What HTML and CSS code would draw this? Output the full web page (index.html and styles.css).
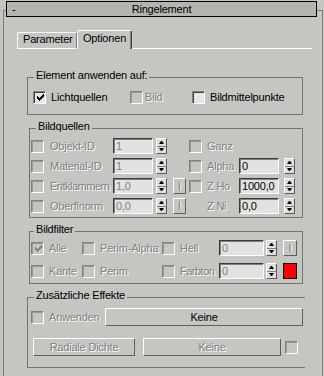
FILE: index.html
```html
<!DOCTYPE html>
<html lang="de">

<head>
    <meta charset="UTF-8">
    <meta name="viewport" content="width=device-width, initial-scale=1.0">
    <title>Ringelement</title>
    <link rel="stylesheet" href="styles.css">
</head>

<body>

    <div class="rollout">
        <div class="rollout-title">
            <span class="rollout-toggle">-</span>
            <span class="rollout-name">Ringelement</span>
        </div>

        <div class="tabs">
            <div class="tab tab-params">Parameter</div>
            <div class="tab tab-options tab-active">Optionen</div>
            <div class="tab-line"></div>
        </div>

        <!-- Element anwenden auf -->
        <fieldset class="group group-apply">
            <legend>Element anwenden auf:</legend>
            <div class="apply-row">
                <label class="check check-lights">
                    <span class="box box-on">
                        <svg width="7" height="7" viewBox="0 0 7 7"><path d="M6 0h1v1h-1zM5 1h2v1h-2zM0 2h1v1h-1zM4 2h3v1h-3zM0 3h2v1h-2zM3 3h3v1h-3zM0 4h5v1h-5zM1 5h3v1h-3zM2 6h1v1h-1z" fill="#000"/></svg>
                    </span>
                    Lichtquellen
                </label>
                <label class="check check-image off"><span class="box"></span>Bild</label>
                <label class="check"><span class="box box-on"></span>Bildmittelpunkte</label>
            </div>
        </fieldset>

        <!-- Bildquellen -->
        <fieldset class="group group-sources">
            <legend>Bildquellen</legend>
            <div class="source-grid">
                <label class="check off"><span class="box"></span>Objekt-ID</label>
                <span class="field off">1</span>
                <span class="spin"><i class="up"></i><i class="dn"></i></span>
                <span></span>
                <label class="check check-right off"><span class="box"></span>Ganz</label>
                <span></span>
                <span></span>

                <label class="check off"><span class="box"></span>Material-ID</label>
                <span class="field off">1</span>
                <span class="spin"><i class="up"></i><i class="dn"></i></span>
                <span></span>
                <label class="check check-right off"><span class="box"></span>Alpha</label>
                <span class="field">0</span>
                <span class="spin spin-right"><i class="up"></i><i class="dn"></i></span>

                <label class="check check-tight off"><span class="box"></span>Entklammern</label>
                <span class="field off">1,0</span>
                <span class="spin"><i class="up"></i><i class="dn"></i></span>
                <span class="ibtn">I</span>
                <label class="check check-right off"><span class="box"></span>Z Ho</label>
                <span class="field">1000,0</span>
                <span class="spin spin-right"><i class="up"></i><i class="dn"></i></span>

                <label class="check off"><span class="box"></span>Oberflnorm</label>
                <span class="field off">0,0</span>
                <span class="spin"><i class="up"></i><i class="dn"></i></span>
                <span class="ibtn">I</span>
                <span class="plain-label off">Z Ni</span>
                <span class="field">0,0</span>
                <span class="spin spin-right"><i class="up"></i><i class="dn"></i></span>
            </div>
        </fieldset>

        <!-- Bildfilter -->
        <fieldset class="group group-filter">
            <legend>Bildfilter</legend>
            <div class="filter-grid">
                <label class="check check-all off">
                    <span class="box">
                        <svg width="7" height="7" viewBox="0 0 7 7"><path d="M6 0h1v1h-1zM5 1h2v1h-2zM0 2h1v1h-1zM4 2h3v1h-3zM0 3h2v1h-2zM3 3h3v1h-3zM0 4h5v1h-5zM1 5h3v1h-3zM2 6h1v1h-1z" fill="#808080"/></svg>
                    </span>
                    Alle
                </label>
                <label class="check check-mid off"><span class="box"></span>Perim-Alpha</label>
                <label class="check check-far off"><span class="box"></span>Hell</label>
                <span class="field field-wide off">0</span>
                <span class="spin spin-filter"><i class="up"></i><i class="dn"></i></span>
                <span class="ibtn ibtn-filter">I</span>

                <label class="check off"><span class="box"></span>Kante</label>
                <label class="check check-mid off"><span class="box"></span>Perim</label>
                <label class="check check-far check-tight off"><span class="box"></span>Farbton</label>
                <span class="field field-wide off">0</span>
                <span class="spin spin-filter"><i class="up"></i><i class="dn"></i></span>
                <span class="swatch"></span>
            </div>
        </fieldset>

        <!-- Zusätzliche Effekte -->
        <fieldset class="group group-extra">
            <legend>Zusätzliche Effekte</legend>
            <div class="extra-row">
                <label class="check check-apply off"><span class="box"></span>Anwenden</label>
                <span class="btn btn-none">Keine</span>
            </div>
            <div class="extra-row-2">
                <span class="btn btn-radial off">Radiale Dichte</span>
                <span class="btn btn-none-2 off">Keine</span>
                <span class="box box-last"></span>
            </div>
        </fieldset>
    </div>

</body>

</html>
```

FILE: styles.css
```css
body {
    margin: 0;
    height: 376px;
    overflow: hidden;
    background-color: #c5c6c1;
    font-family: "Liberation Sans", Arial, sans-serif;
    font-size: 11px;
    letter-spacing: -0.2px;
    color: #000;
}

.off {
    color: #808080;
    text-shadow: 1px 1px 0 #fff;
}

/* rollout frame + title bar */
.rollout {
    box-sizing: border-box;
    width: 320px;
    height: 366px;
    margin: 10px 0 0 3px;
    border: 1px solid #7c7e7a;
    border-bottom: none;
}

.rollout-title {
    box-sizing: border-box;
    display: flex;
    width: 311px;
    height: 16px;
    margin: -10px 0 0 2px;
    border: 1px solid #000;
    background-color: #b3b5af;
    line-height: 14px;
}

.rollout-toggle {
    width: 14px;
    padding-left: 5px;
}

.rollout-name {
    flex: 1;
    text-align: center;
    padding-right: 19px;
}

/* tabs */
.tabs {
    display: flex;
    align-items: flex-end;
    width: 295px;
    margin: 13px 0 0 13px;
}

.tab {
    box-sizing: border-box;
    padding: 0 0 2px 5px;
    border: 1px solid;
    border-color: #fff #7a7a7a #fff #fff;
    border-radius: 2px 2px 0 0;
    line-height: 13px;
}

.tab-params {
    width: 60px;
}

.tab-options {
    width: 55px;
}

.tab-active {
    padding: 1px 0 4px 5px;
    border-bottom: none;
    border-right-color: #404040;
    box-shadow: inset -1px 0 #808080;
}

.tab-line {
    flex: 1;
    border-bottom: 1px solid #fff;
}

/* group boxes */
.group {
    box-sizing: border-box;
    min-width: 0;
    margin: 5px 0 0 25px;
    padding: 0;
    border: 1px solid #737571;
}

.group legend {
    margin-left: 6px;
    padding: 0 2px 4px;
    line-height: 13px;
}

.group-apply {
    width: 276px;
    margin: 20px 0 0 23px;
    padding: 3px 0 9px;
}

.group-sources {
    width: 274px;
    padding: 1px 0 3px;
}

.group-filter {
    width: 274px;
    padding: 0 0 4px;
}

.group-filter legend {
    margin-left: 4px;
}

.group-extra {
    width: 278px;
    margin-left: 23px;
    padding: 2px 0 11px;
    border-right: none;
}

/* checkboxes */
.check {
    display: flex;
    align-items: center;
    gap: 6px;
    height: 16px;
    white-space: nowrap;
}

.check-tight {
    letter-spacing: -0.5px;
}

.box {
    box-sizing: border-box;
    display: flex;
    align-items: center;
    justify-content: center;
    flex: none;
    width: 13px;
    height: 13px;
    border: 1px solid;
    border-color: #808080 #fff #fff #808080;
    box-shadow: inset 1px 1px #9a9a98;
}

.box-on {
    background-color: #e6e6e4;
    box-shadow: inset 1px 1px #404040;
}

.box svg {
    display: block;
    margin: 1px 0 0 1px;
}

.apply-row {
    display: flex;
    height: 16px;
}

.check-lights {
    width: 97px;
    padding-left: 5px;
    gap: 5px;
}

.check-image {
    width: 62px;
    gap: 2px;
}

.apply-row .check:last-child {
    gap: 5px;
}

/* inputs, spinners, buttons */
.field {
    box-sizing: border-box;
    display: block;
    width: 40px;
    height: 16px;
    padding-left: 2px;
    border: 1px solid;
    border-color: #3a3a3a #fff #fff #3a3a3a;
    box-shadow: inset 1px 1px #808080;
    background-color: #e2e2e0;
    line-height: 14px;
    overflow: hidden;
}

.field.off {
    text-shadow: none;
}

.spin {
    box-sizing: border-box;
    display: flex;
    flex-direction: column;
    width: 11px;
    height: 16px;
    margin-left: 3px;
    border: 1px solid;
    border-color: #fff #5a5a5a #5a5a5a #fff;
    background-color: #dddddb;
}

.spin i {
    flex: 1;
    display: flex;
    align-items: center;
    justify-content: center;
}

.spin i + i {
    border-top: 1px solid #808080;
}

.spin i::after {
    content: "";
    width: 1px;
    border-left: 2px solid transparent;
    border-right: 2px solid transparent;
}

.spin .up::after {
    border-bottom: 3px solid #000;
}

.spin .dn::after {
    border-top: 3px solid #000;
}

.ibtn {
    box-sizing: border-box;
    width: 13px;
    height: 16px;
    margin-left: 3px;
    border: 1px solid;
    border-color: #fff #5e5e5e #5e5e5e #fff;
    color: #808080;
    text-shadow: 1px 0 0 #fff;
    text-align: center;
    line-height: 14px;
}

.btn {
    box-sizing: border-box;
    display: block;
    height: 18px;
    border: 1px solid;
    border-color: #fff #5e5e5e #5e5e5e #fff;
    text-align: center;
    line-height: 16px;
}

/* Bildquellen */
.source-grid {
    display: grid;
    grid-template-columns: 83px 40px 17px 16px 53px 40px 16px;
    grid-auto-rows: 16px;
    row-gap: 4px;
    align-items: center;
}

.source-grid > .check {
    padding-left: 1px;
}

.source-grid > .check-right {
    padding-left: 3px;
    gap: 5px;
}

.plain-label {
    padding-left: 21px;
    white-space: nowrap;
}

.spin-right {
    margin-left: 5px;
}

/* Bildfilter */
.filter-grid {
    display: grid;
    grid-template-columns: 52px 79px 58px 45px 17px 16px;
    grid-auto-rows: 16px;
    row-gap: 7px;
    align-items: center;
}

.filter-grid > .check {
    padding-left: 1px;
    gap: 5px;
}

.filter-grid > .check-mid {
    padding-left: 0;
}

.filter-grid > .check-far {
    padding-left: 1px;
    gap: 5px;
}

.field-wide {
    width: 45px;
}

.spin-filter {
    margin-left: 2px;
}

.ibtn-filter {
    width: 14px;
    margin-left: 2px;
}

.swatch {
    box-sizing: border-box;
    width: 14px;
    height: 16px;
    margin-left: 2px;
    border: 1px solid #000;
    background-color: #ff0000;
}

/* Zusätzliche Effekte */
.extra-row {
    display: grid;
    grid-template-columns: 77px 198px;
    height: 18px;
    align-items: center;
}

.check-apply {
    padding-left: 3px;
    gap: 5px;
}

.extra-row-2 {
    display: flex;
    align-items: center;
    height: 18px;
    margin-top: 12px;
}

.btn-radial {
    width: 102px;
    margin-left: 5px;
}

.btn-none-2 {
    width: 138px;
    margin-left: 8px;
}

.box-last {
    margin-left: 4px;
}
```
